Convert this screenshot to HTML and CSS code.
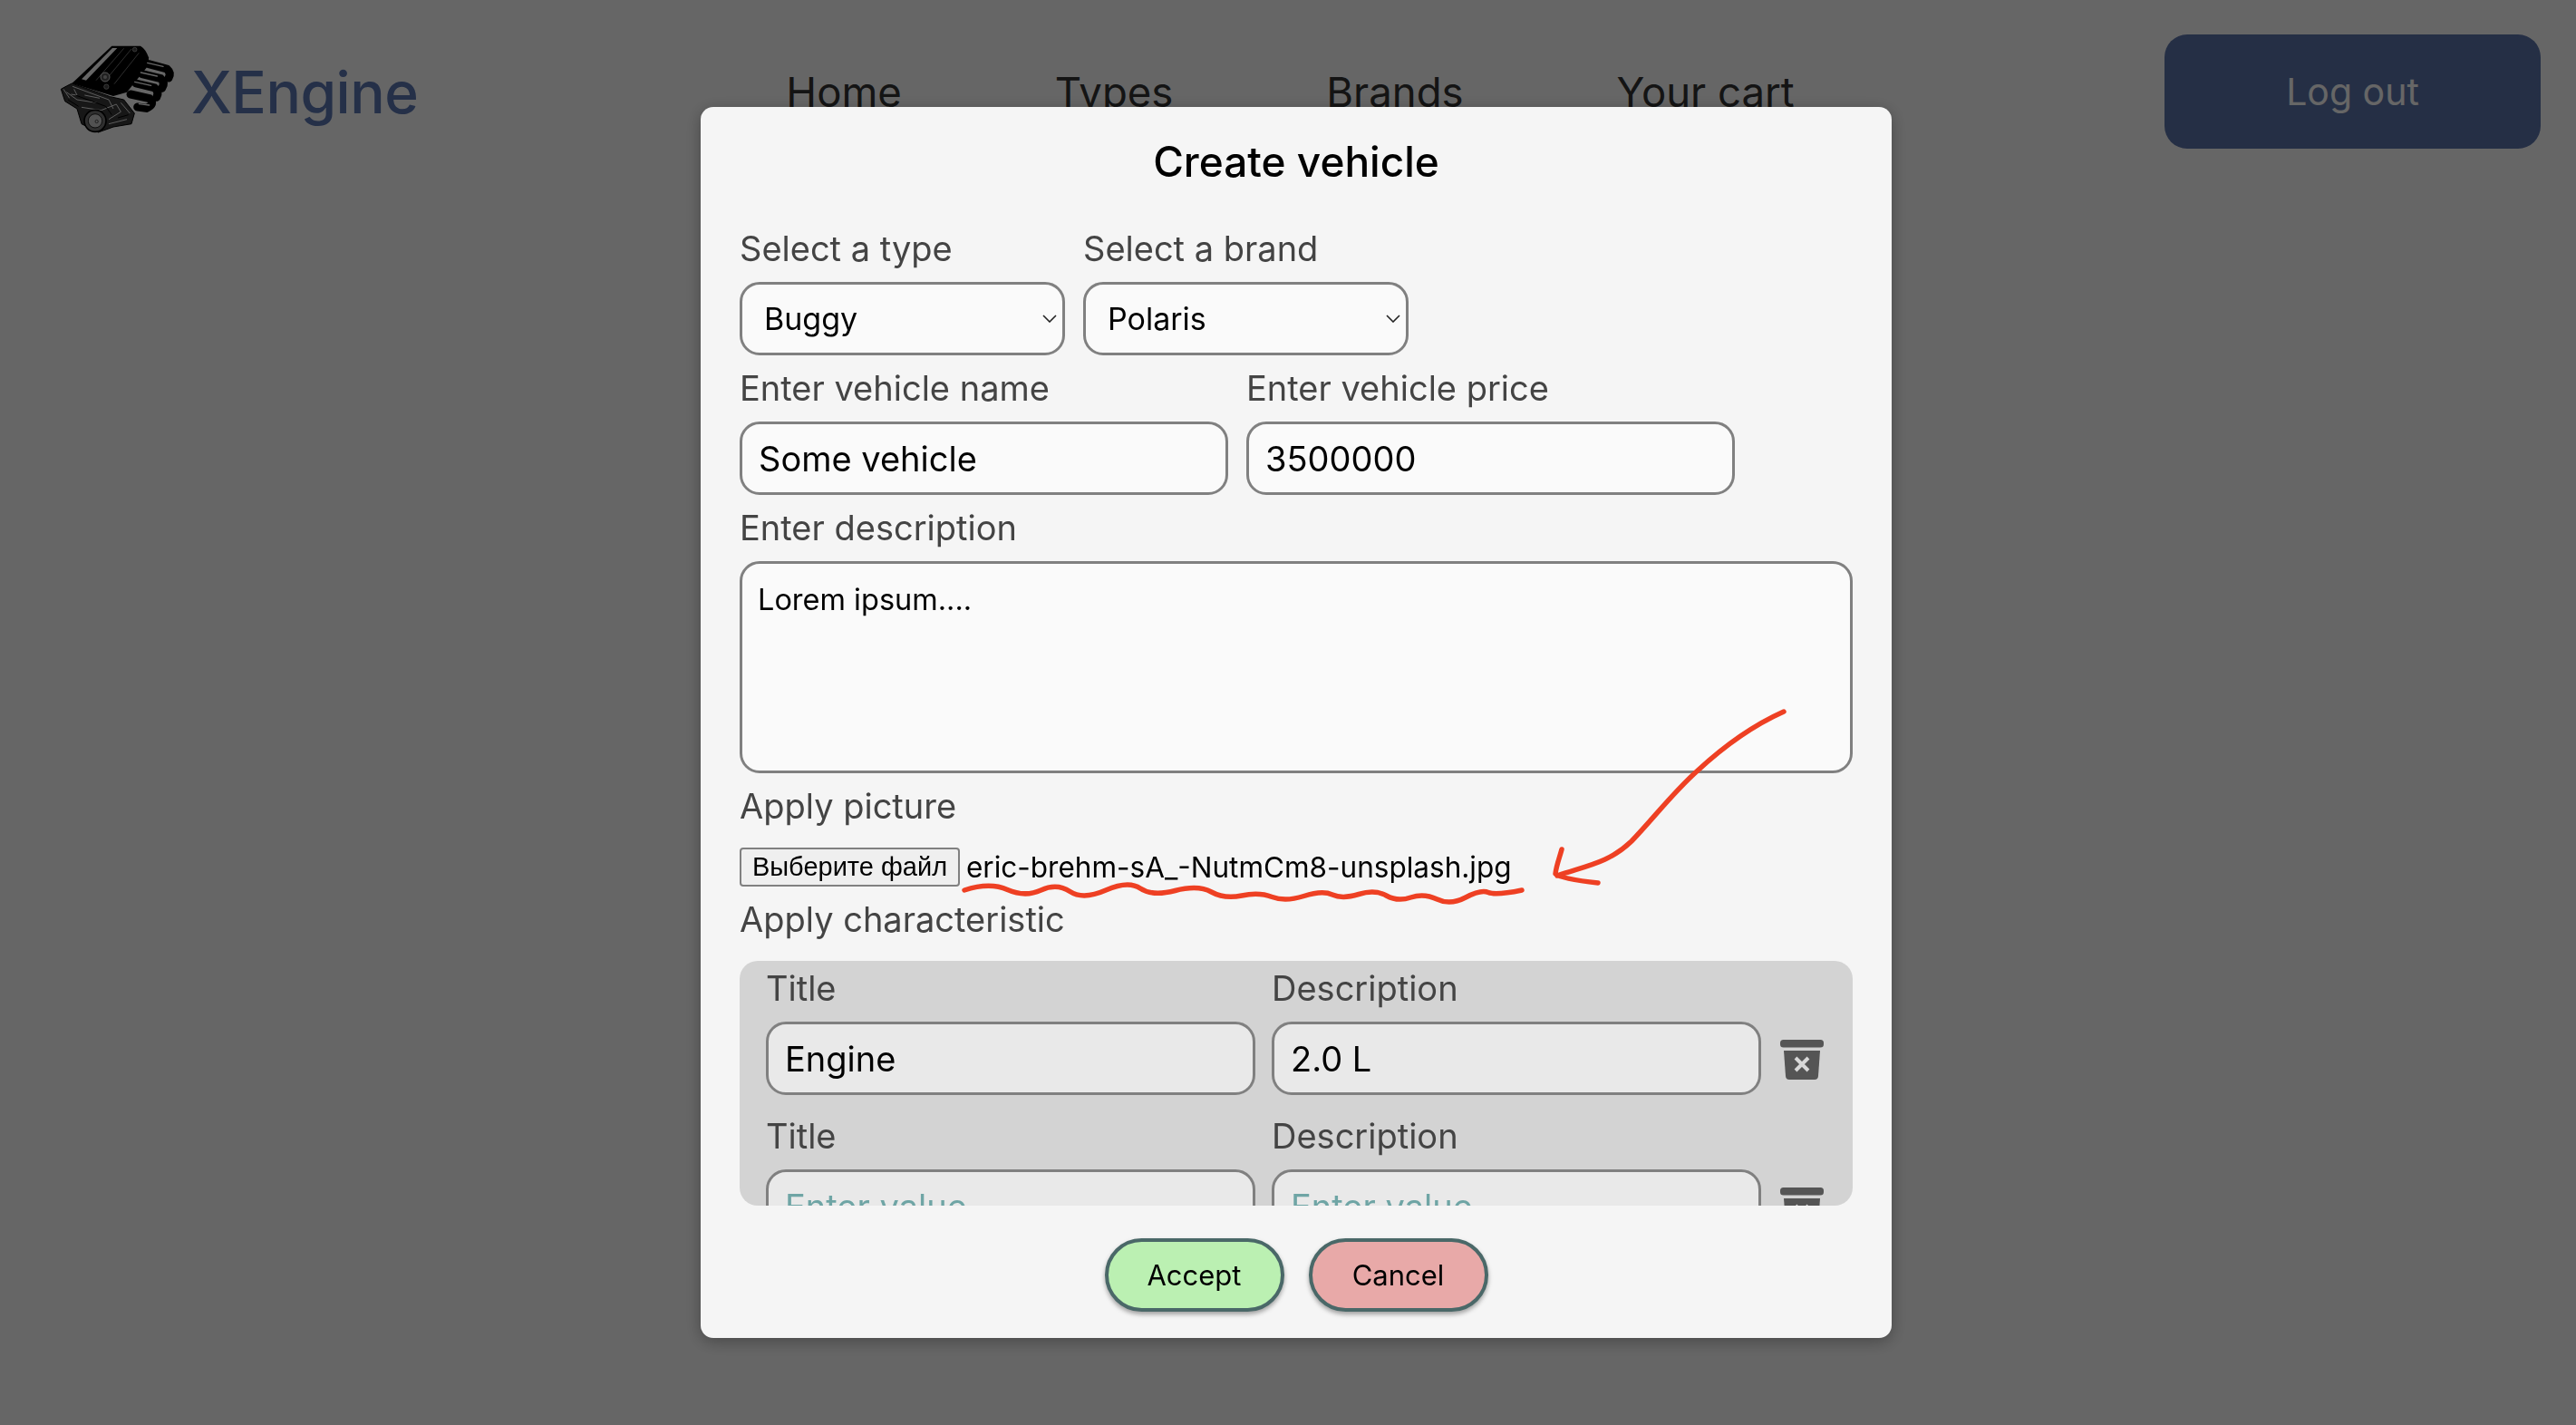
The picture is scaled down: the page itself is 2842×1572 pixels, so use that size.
FILE: index.html
```html
<!DOCTYPE html>
<html lang="en">
<head>
<meta charset="utf-8">
<title>XEngine</title>
<link rel="stylesheet" href="styles.css">
</head>
<body>
<header class="header">
  <a class="brand">
    <svg class="brand-logo" viewBox="60 24 420 378" aria-hidden="true">
      <path fill="#000" d="M250 62 L345 62 Q362 72 372 100 L372 125 L300 215 L255 228 L118 186 Z"/>
      <path fill="#fff" d="M252 69 L268 69 L165 176 L150 172 Z"/>
      <path stroke="#888" stroke-width="2.5" fill="none" d="M290 70 L198 176 M315 72 L238 165 M340 85 L258 188"/>
      <circle cx="228" cy="165" r="15" fill="#555" stroke="#ddd" stroke-width="3"/>
      <circle cx="228" cy="165" r="6" fill="#aaa"/>
      <circle cx="232" cy="197" r="8" fill="#444" stroke="#bbb" stroke-width="2"/>
      <circle cx="326" cy="74" r="7" fill="#444" stroke="#bbb" stroke-width="2"/>
      <g fill="none" stroke-linecap="round">
        <path stroke="#000" stroke-width="27" d="M372 122 L432 138 Q448 152 438 168"/>
        <path stroke="#000" stroke-width="27" d="M350 155 L412 170 Q428 184 416 202"/>
        <path stroke="#000" stroke-width="27" d="M330 186 L392 201 Q408 214 398 232"/>
        <path stroke="#000" stroke-width="27" d="M312 222 L375 236 Q395 255 365 268 L335 264"/>
        <path stroke="#fff" stroke-width="4" d="M368 118 L420 130 M346 150 L400 162 M326 181 L380 193 M340 254 L374 258"/>
      </g>
      <path fill="#3a3a3a" stroke="#000" stroke-width="3" d="M118 186 L245 230 L290 240 L325 285 L315 320 L255 330 L205 348 L150 320 L135 270 L95 245 L82 205 L100 195 Z"/>
      <path fill="none" stroke="#e8e8e8" stroke-width="3" d="M120 196 L240 240 L255 270 M100 215 L135 240 L200 250 M90 205 L110 235 M160 225 L210 235 M150 265 L215 275 L265 255 L280 280 L240 305 M125 205 L135 225 L115 222 M240 320 L300 305 M280 250 L310 285"/>
      <path fill="none" stroke="#000" stroke-width="3" d="M130 225 L230 262 L250 290 M105 240 L140 262 M270 300 L305 290"/>
      <circle cx="195" cy="310" r="36" fill="#777" stroke="#000" stroke-width="5"/>
      <circle cx="195" cy="310" r="23" fill="#ccc" stroke="#222" stroke-width="3"/>
      <circle cx="200" cy="312" r="5" fill="none" stroke="#222" stroke-width="2"/>
    </svg>
    <span class="brand-name">XEngine</span>
  </a>
  <nav class="nav">
    <a class="nav-link">Home</a>
    <a class="nav-link">Types</a>
    <a class="nav-link">Brands</a>
    <a class="nav-link">Your cart</a>
  </nav>
  <button class="logout" type="button">Log out</button>
</header>

<div class="overlay">
  <form class="modal">
    <h2 class="modal-title">Create vehicle</h2>

    <div class="row">
      <div class="field">
        <label class="label">Select a type</label>
        <select class="control select"><option>Buggy</option></select>
      </div>
      <div class="field">
        <label class="label">Select a brand</label>
        <select class="control select"><option>Polaris</option></select>
      </div>
    </div>

    <div class="row">
      <div class="field">
        <label class="label">Enter vehicle name</label>
        <input class="control text wide" type="text" value="Some vehicle">
      </div>
      <div class="field">
        <label class="label">Enter vehicle price</label>
        <input class="control text wide" type="text" value="3500000">
      </div>
    </div>

    <div class="field">
      <label class="label">Enter description</label>
      <textarea class="control area">Lorem ipsum....</textarea>
    </div>

    <label class="label">Apply picture</label>
    <div class="file">
      <button class="file-button" type="button">Выберите файл</button>
      <span class="file-name">eric-brehm-sA_-NutmCm8-unsplash.jpg</span>
    </div>

    <label class="label">Apply characteristic</label>
    <div class="chars">
      <div class="char-row">
        <div class="field">
          <label class="label label-small">Title</label>
          <input class="control text narrow" type="text" value="Engine">
        </div>
        <div class="field">
          <label class="label label-small">Description</label>
          <input class="control text narrow" type="text" value="2.0 L">
        </div>
        <svg class="trash" viewBox="0 0 48 44" aria-hidden="true">
          <rect x="0" y="0" width="48" height="8.5" rx="3.5"/>
          <path d="M4 12 H44 L42 40 Q41.7 44 38 44 H10 Q6.3 44 6 40 Z"/>
          <path class="trash-x" d="M17 20 L31 34 M31 20 L17 34"/>
        </svg>
      </div>
      <div class="char-row">
        <div class="field">
          <label class="label label-small">Title</label>
          <input class="control text narrow" type="text" placeholder="Enter value">
        </div>
        <div class="field">
          <label class="label label-small">Description</label>
          <input class="control text narrow" type="text" placeholder="Enter value">
        </div>
        <svg class="trash" viewBox="0 0 48 44" aria-hidden="true">
          <rect x="0" y="0" width="48" height="8.5" rx="3.5"/>
          <path d="M4 12 H44 L42 40 Q41.7 44 38 44 H10 Q6.3 44 6 40 Z"/>
          <path class="trash-x" d="M17 20 L31 34 M31 20 L17 34"/>
        </svg>
      </div>
    </div>

    <div class="actions">
      <button class="pill accept" type="button">Accept</button>
      <button class="pill cancel" type="button">Cancel</button>
    </div>
  </form>
</div>

<svg class="annotation" viewBox="0 0 2842 1572" aria-hidden="true">
  <path d="M1064 982 Q1092 973 1111.5 981.5 Q1131 990 1148.5 982 Q1166 974 1180.5 983.5 Q1195 993 1220 982 Q1245 971 1258 980 Q1271 989 1296.5 982.5 Q1322 976 1336.5 984 Q1351 992 1370 988 Q1389 984 1403.5 989.5 Q1418 995 1438.5 988.5 Q1459 982 1470 987 Q1481 992 1499 986.5 Q1517 981 1529.5 988 Q1542 995 1556.5 990 Q1571 985 1585.5 992 Q1600 999 1617 990 Q1634 981 1642 984.5 Q1650 988 1679 982"/>
  <path d="M1968 785 C1930 802 1900 825 1873 850 C1845 875 1825 902 1800 928 C1775 952 1750 955 1718 966"/>
  <path d="M1723 937 C1720 948 1717 955 1716 964 C1722 969 1745 972 1763 974"/>
</svg>
</body>
</html>
```
FILE: styles.css
```css
* { box-sizing: border-box; }

html, body { margin: 0; height: 100%; }

body {
  background: #fff;
  font-family: Inter, "Noto Sans", "Liberation Sans", sans-serif;
  overflow: hidden;
}

.header {
  display: flex;
  align-items: center;
  padding: 38px 39px 0 60px;
}

.brand { display: flex; align-items: center; gap: 11px; }
.brand-logo { width: 140px; height: 126px; display: block; }
.brand-name { font-size: 64px; font-weight: 500; color: #5c78b4; letter-spacing: -0.5px; }

.nav { display: flex; gap: 169px; margin-left: 406px; }
.nav-link { font-size: 45.5px; color: #333; }

.logout {
  margin-left: auto;
  width: 415px;
  height: 126px;
  border: 0;
  border-radius: 25px;
  background: #5d76ad;
  color: #fff;
  font: inherit;
  font-size: 41px;
}

.overlay {
  position: fixed;
  inset: 0;
  background: rgba(0, 0, 0, 0.6);
  padding: 118px 0 0 773px;
}

.modal {
  width: 1314px;
  height: 1358px;
  padding: 0 43px 0 43px;
  background: #f5f5f5;
  border-radius: 14px;
  box-shadow: 0 4px 18px rgba(0, 0, 0, 0.3);
}

.modal-title {
  margin: 0;
  height: 120px;
  line-height: 120px;
  text-align: center;
  font-size: 46px;
  font-weight: 500;
  color: #000;
}

.row { display: flex; gap: 20px; }
.field { display: flex; flex-direction: column; }

.label {
  display: block;
  height: 73px;
  line-height: 73px;
  font-size: 38px;
  color: #444;
}

.label-small { height: 67px; line-height: 60px; }

.control {
  height: 81px;
  border: 3px solid #808080;
  border-radius: 22px;
  background-color: rgba(255, 255, 255, 0.5);
  color: #000;
  font-family: inherit;
  outline: none;
}

.select {
  appearance: none;
  width: 359px;
  padding: 0 0 0 24px;
  font-size: 34px;
  background-image: url("data:image/svg+xml,%3Csvg xmlns='http://www.w3.org/2000/svg' width='16' height='9'%3E%3Cpath d='M1 1 L8 8 L15 1' fill='none' stroke='%23222' stroke-width='1.6'/%3E%3C/svg%3E");
  background-repeat: no-repeat;
  background-position: right 6px center;
}

.text { padding: 0 18px; font-size: 38px; }
.wide { width: 539px; }
.narrow { width: 540px; }
.text::placeholder { color: #6fa5a5; opacity: 1; }

.area {
  display: block;
  width: 1228px;
  height: 234px;
  padding: 15px 17px;
  font-size: 32.5px;
  line-height: 50px;
  resize: none;
}

.file { display: flex; align-items: center; gap: 7px; height: 43px; margin-top: 9px; }

.file-button {
  width: 243px;
  height: 43px;
  padding: 0;
  border: 2px solid #808080;
  border-radius: 4px;
  background: #efefef;
  color: #000;
  font-family: "Liberation Sans", sans-serif;
  font-size: 29px;
}

.file-name { font-size: 31.5px; color: #000; white-space: nowrap; }

.chars {
  height: 270px;
  margin-top: 9px;
  padding: 0 0 0 29px;
  overflow: hidden;
  background: #d3d3d3;
  border-radius: 20px;
}

.char-row {
  display: flex;
  gap: 18px;
  height: 163px;
}

.trash {
  width: 48px;
  height: 44px;
  margin: 87px 0 0 3px;
  fill: #555;
  flex: none;
}

.trash-x { fill: none; stroke: #d8d8d8; stroke-width: 4; }

.actions { display: flex; justify-content: center; gap: 27px; margin-top: 36px; }

.pill {
  width: 198px;
  height: 81px;
  border: 4px solid #4a6868;
  border-radius: 41px;
  box-shadow: 0 3px 5px rgba(0, 0, 0, 0.35);
  color: #000;
  font-family: inherit;
  font-size: 31px;
}

.accept { background: #bbf0b2; }
.cancel { background: #e8a9a8; }

.annotation {
  position: fixed;
  inset: 0;
  width: 2842px;
  height: 1572px;
  fill: none;
  stroke: #ee4023;
  stroke-width: 5.5;
  stroke-linecap: round;
  stroke-linejoin: round;
  pointer-events: none;
}
```
